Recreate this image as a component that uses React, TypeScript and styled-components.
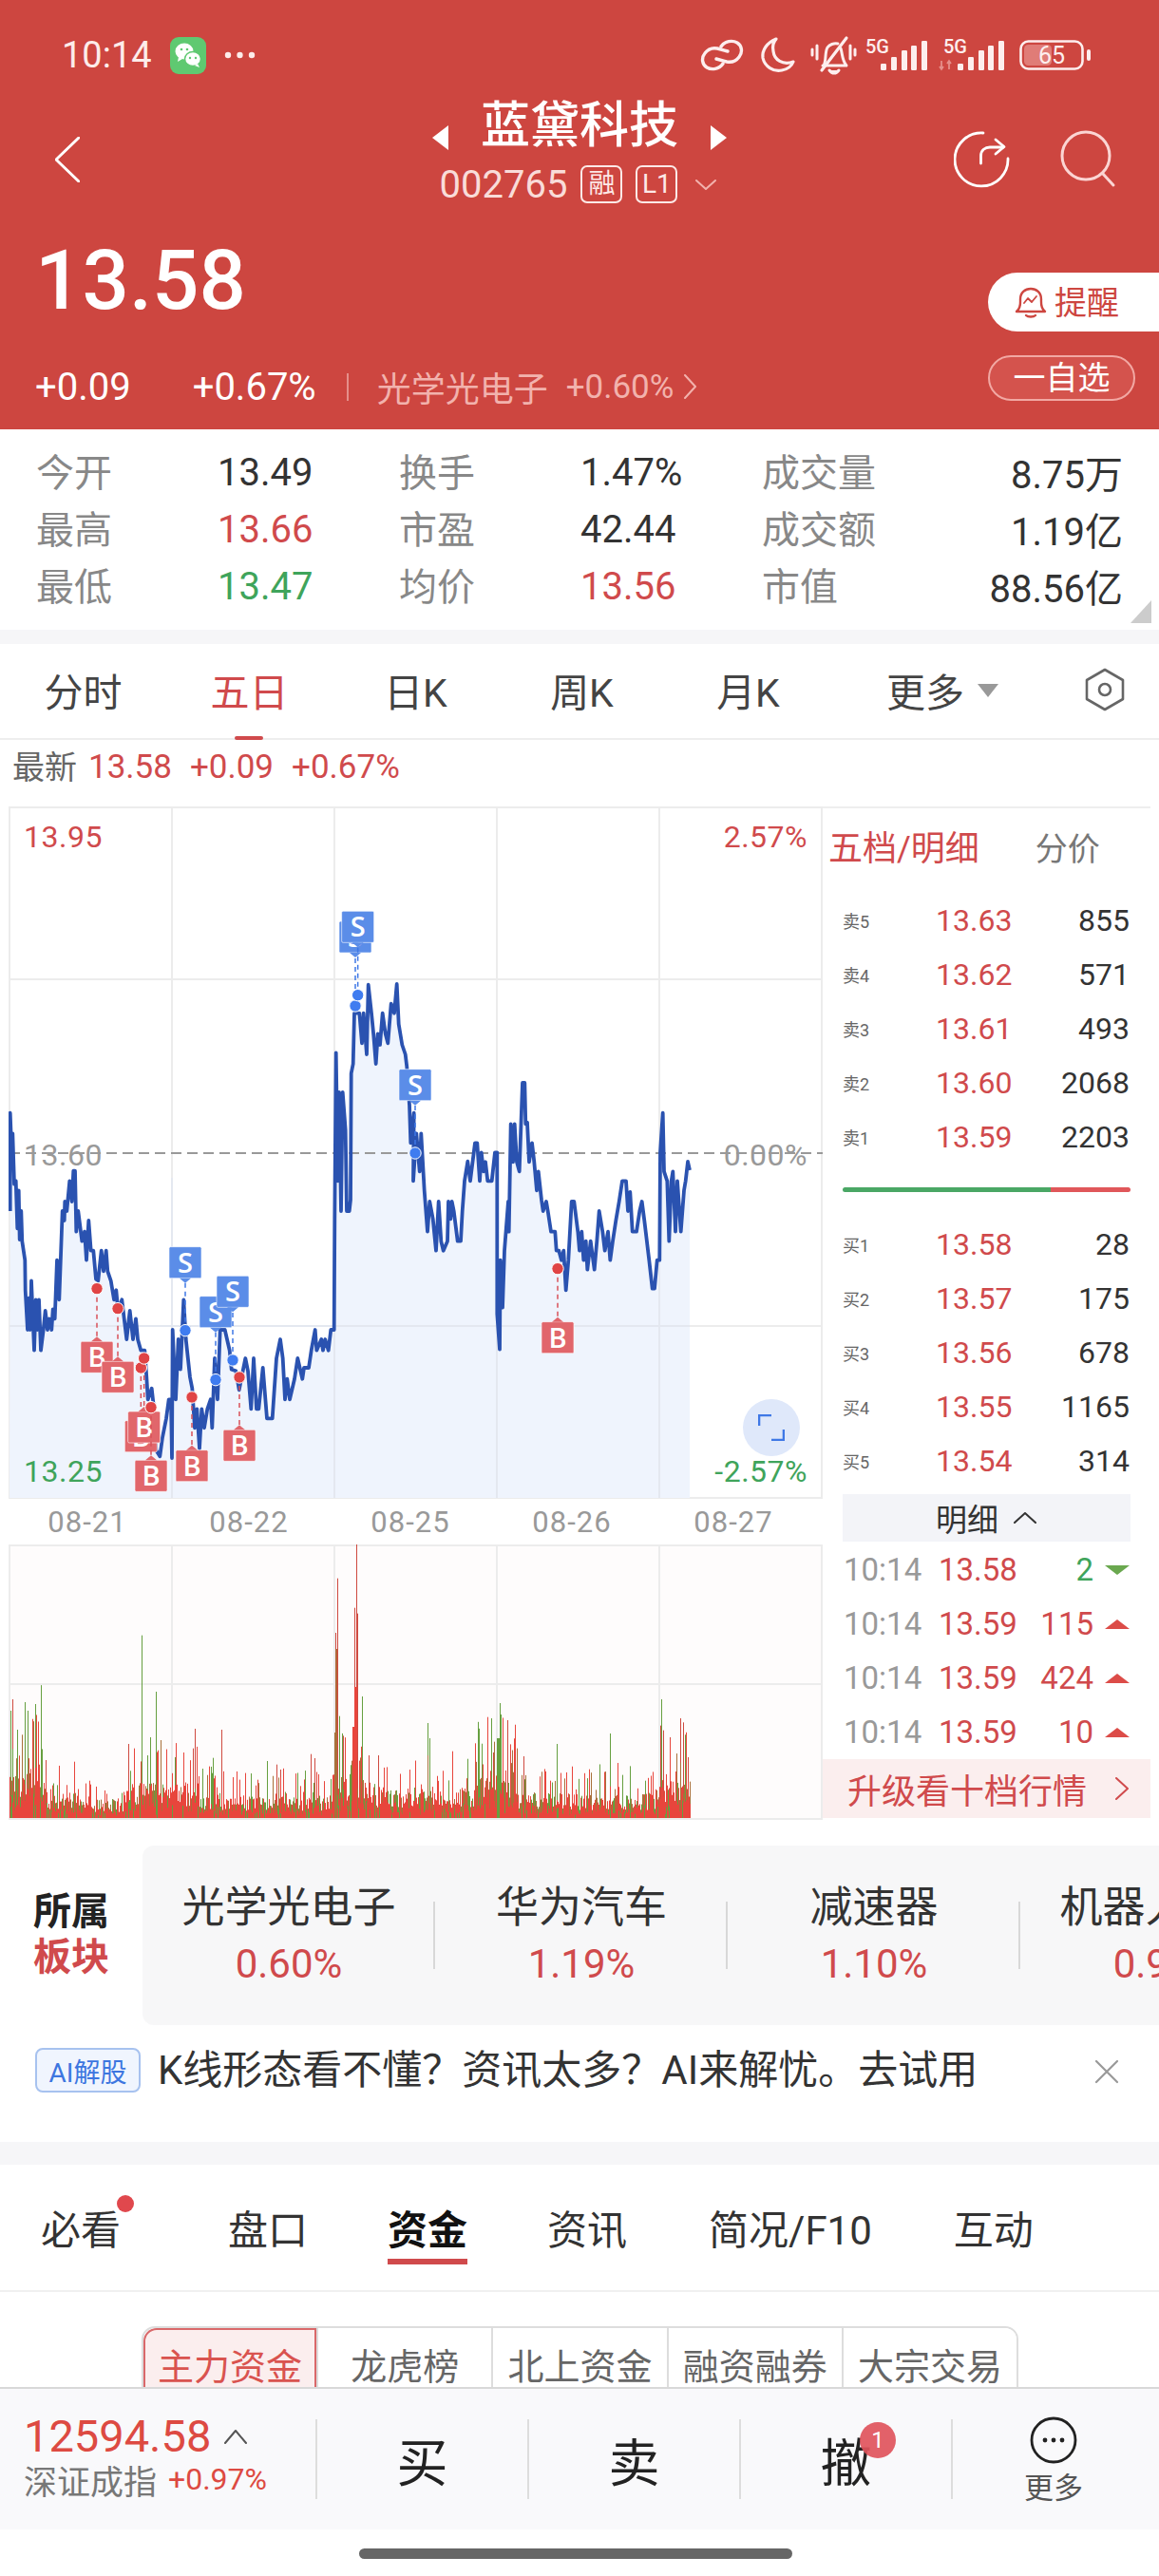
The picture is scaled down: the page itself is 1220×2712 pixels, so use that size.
import React from 'react';
import styled, { createGlobalStyle } from 'styled-components';

const RED = '#d04a4c';
const GREEN = '#3fa45b';
const HEAD = '#cd4640';
const FONT = 'Roboto, "Noto Sans CJK SC", sans-serif';

const Global = createGlobalStyle`
  html, body { margin: 0; padding: 0; background: #fff; }
  body { width: 1220px; height: 2712px; overflow: hidden; font-family: ${FONT}; }
  * { box-sizing: border-box; }
`;

const Page = styled.div`
  width: 1220px;
  height: 2712px;
  overflow: hidden;
  background: #fff;
  color: #333;
`;

/* ---------- red header ---------- */
const Header = styled.header`
  height: 452px;
  background: ${HEAD};
  color: #fff;
`;

const StatusBar = styled.div`
  height: 100px;
  padding: 16px 72px 0 65px;
  display: flex;
  align-items: center;
  justify-content: space-between;
`;

const StatusLeft = styled.div`
  display: flex;
  align-items: center;
  gap: 19px;
`;

const Clock = styled.span`
  font-size: 38px;
  line-height: 40px;
  color: #fdecea;
`;

const StatusIcons = styled.div`
  display: flex;
  align-items: center;
`;

const StatusGlyph = styled.svg<{ $gap?: number }>`
  display: block;
  overflow: visible;
  margin-left: ${(p) => p.$gap ?? 0}px;
`;

const Nav = styled.div`
  height: 136px;
  padding: 1px 42px 0 58px;
  display: grid;
  grid-template-columns: 312px 480px 328px;
`;

const BackCell = styled.div`
  display: flex;
  align-items: center;
  height: 134px;
`;

const TitleCell = styled.div`
  display: flex;
  flex-direction: column;
  align-items: center;
`;

const TitleLine = styled.div`
  height: 64px;
  display: flex;
  align-items: center;
  gap: 34px;
  font-size: 52px;
  font-weight: 500;
  line-height: 64px;
`;

const Caret = styled.span<{ $left?: boolean }>`
  width: 0;
  height: 0;
  margin-top: 24px;
  border-top: 13px solid transparent;
  border-bottom: 13px solid transparent;
  ${(p) => (p.$left ? 'border-right: 17px solid #fff;' : 'border-left: 17px solid #fff;')}
`;

const CodeLine = styled.div`
  height: 58px;
  margin-left: -3px;
  display: flex;
  align-items: center;
  font-size: 40px;
  color: #f9dcd9;
`;

const CodeBadge = styled.span`
  width: 44px;
  height: 40px;
  margin-left: 14px;
  border: 2px solid #fde9e7;
  border-radius: 7px;
  display: flex;
  align-items: center;
  justify-content: center;
  font-size: 28px;
  line-height: 1;
  color: #fde9e7;
`;

const CodeArrow = styled.span`
  margin-left: 19px;
  display: flex;
`;

const ActionCell = styled.div`
  height: 134px;
  display: flex;
  align-items: center;
  justify-content: flex-end;
  gap: 52px;
`;

const Quote = styled.div`
  display: flex;
  justify-content: space-between;
`;

const QuoteLeft = styled.div`
  padding: 14px 0 0 37px;
`;

const BigPrice = styled.div`
  font-size: 87px;
  line-height: 90px;
  font-weight: 500;
`;

const ChangeRow = styled.div`
  margin-top: 42px;
  height: 50px;
  display: flex;
  align-items: center;
  font-size: 40px;
`;

const ChangeValue = styled.span<{ $gap?: number }>`
  margin-left: ${(p) => p.$gap ?? 0}px;
`;

const Pipe = styled.span`
  width: 2px;
  height: 29px;
  margin: 0 30px 0 32px;
  background: #e58f8a;
`;

const Sector = styled.span`
  font-size: 36px;
  color: #f2b2ad;
`;

const SectorPct = styled.span`
  margin-left: 19px;
  font-size: 35px;
  color: #f2b2ad;
`;

const SectorArrow = styled.span`
  margin-left: 11px;
  display: flex;
`;

const QuoteRight = styled.div`
  width: 180px;
  padding-top: 51px;
  display: flex;
  flex-direction: column;
  gap: 25px;
`;

const RemindButton = styled.div`
  height: 62px;
  padding-left: 28px;
  display: flex;
  align-items: center;
  gap: 8px;
  background: #fff;
  border-radius: 31px 0 0 31px;
  color: ${HEAD};
  font-size: 34px;
`;

const RemindText = styled.span`
  margin-top: -4px;
`;

const WatchButton = styled.div`
  width: 155px;
  height: 48px;
  display: flex;
  align-items: center;
  justify-content: center;
  border: 2px solid #f2a8a3;
  border-radius: 24px;
  background: #d4534d;
  font-size: 34px;
  line-height: 1;
`;

/* ---------- stats ---------- */
const Stats = styled.div`
  height: 211px;
  padding: 15px 38px 0;
  position: relative;
  display: grid;
  grid-template-columns: 192px 190px 192px 190px 200px 180px;
  grid-auto-rows: 60px;
  align-items: center;
`;

const StatLabel = styled.span`
  margin-top: -4px;
  font-size: 40px;
  color: #888;
`;

const StatValue = styled.span<{ $tone?: 'up' | 'down'; $end?: boolean }>`
  margin-left: ${(p) => (p.$end ? 0 : -1)}px;
  font-size: 40px;
  color: ${(p) => (p.$tone === 'up' ? RED : p.$tone === 'down' ? GREEN : '#333')};
  text-align: ${(p) => (p.$end ? 'right' : 'left')};
`;

const CornerMark = styled.span`
  position: absolute;
  right: 8px;
  bottom: 7px;
  width: 0;
  height: 0;
  border-left: 22px solid transparent;
  border-bottom: 24px solid #ccc;
`;

const Band = styled.div<{ $h: number }>`
  height: ${(p) => p.$h}px;
  background: #f6f6f8;
`;

/* ---------- chart tabs ---------- */
const PeriodTabs = styled.div`
  height: 101px;
  padding-bottom: 4px;
  display: flex;
  align-items: center;
  border-bottom: 2px solid #eee;
  position: relative;
`;

const PeriodTab = styled.div<{ $active?: boolean }>`
  width: 175px;
  text-align: center;
  font-size: 41px;
  position: relative;
  color: ${(p) => (p.$active ? RED : '#444')};
`;

const ActiveMark = styled.span`
  position: absolute;
  left: 247px;
  bottom: -2px;
  width: 30px;
  height: 4px;
  border-radius: 2px;
  background: ${RED};
`;

const MoreTab = styled.div`
  margin-left: 58px;
  display: flex;
  align-items: center;
  gap: 14px;
  font-size: 41px;
  color: #444;
`;

const DownCaret = styled.span`
  width: 0;
  height: 0;
  margin-top: 2px;
  border-left: 11px solid transparent;
  border-right: 11px solid transparent;
  border-top: 14px solid #999;
`;

const SettingCell = styled.div`
  margin-left: auto;
  margin-right: 35px;
  display: flex;
`;

const LatestRow = styled.div`
  height: 70px;
  padding: 9px 0 0 13px;
  display: flex;
  font-size: 35px;
  line-height: 40px;
  color: ${RED};
`;

const LatestTag = styled.span`
  margin-right: 12px;
  font-size: 34px;
  color: #666;
`;

const LatestValue = styled.span`
  margin-right: 19px;
`;

/* ---------- chart + order book ---------- */
const Market = styled.div`
  height: 1067px;
  display: flex;
`;

const ChartColumn = styled.div`
  width: 866px;
`;

const PriceChart = styled.div`
  position: relative;
  width: 857px;
  height: 729px;
  margin-left: 9px;
  background: #fff;
`;

const ChartSvg = styled.svg`
  display: block;
`;

const AxisLabel = styled.span<{ $tone: 'up' | 'down' | 'flat'; $top: number; $right?: boolean }>`
  position: absolute;
  top: ${(p) => p.$top}px;
  ${(p) => (p.$right ? 'right: 16px;' : 'left: 16px;')}
  font-size: 32px;
  line-height: 36px;
  letter-spacing: 0.5px;
  color: ${(p) => (p.$tone === 'up' ? RED : p.$tone === 'down' ? GREEN : '#999')};
`;

const ExpandButton = styled.div`
  position: absolute;
  left: 773px;
  top: 624px;
  width: 60px;
  height: 60px;
  border-radius: 50%;
  background: #dfe8fa;
  display: flex;
  align-items: center;
  justify-content: center;
`;

const DateRow = styled.div`
  height: 48px;
  padding-left: 7px;
  display: grid;
  grid-template-columns: repeat(5, 170px);
  align-items: center;
  font-size: 31px;
  letter-spacing: 1px;
  color: #999;
  text-align: center;
`;

const VolumeChart = styled.div`
  margin-left: 9px;
  width: 857px;
  height: 290px;
`;

const BookColumn = styled.aside`
  width: 354px;
  padding-right: 9px;
  display: flex;
  flex-direction: column;
`;

const BookHead = styled.div`
  height: 91px;
  padding: 20px 0 0 6px;
  display: flex;
  border-top: 2px solid #eee;
`;

const BookTitle = styled.span`
  font-size: 36px;
  line-height: 46px;
  color: ${RED};
`;

const BookSwitch = styled.span`
  margin-left: 59px;
  font-size: 34px;
  line-height: 46px;
  color: #777;
`;

const BookRows = styled.div`
  padding: 0 22px 0 21px;
`;

const OrderRow = styled.div`
  height: 57px;
  display: grid;
  grid-template-columns: 98px 100px 1fr;
  align-items: center;
`;

const OrderLabel = styled.span`
  font-size: 18px;
  color: #666;
`;

const OrderPrice = styled.span`
  font-size: 32px;
  color: ${RED};
`;

const OrderQty = styled.span`
  font-size: 32px;
  text-align: right;
  color: #333;
`;

const Ratio = styled.div`
  height: 56px;
  padding: 25px 21px 0;
  display: flex;
`;

const RatioPart = styled.span<{ $buy?: boolean }>`
  display: block;
  height: 5px;
  ${(p) =>
    p.$buy
      ? `width: 219px; background: #4aa765; border-radius: 3px 0 0 3px;`
      : `flex: 1; background: #e0575a; border-radius: 0 3px 3px 0;`}
`;

const DetailToggle = styled.div`
  height: 50px;
  margin: 7px 21px 0;
  background: #f3f4f8;
  display: flex;
  align-items: center;
  padding-left: 98px;
  gap: 16px;
  font-size: 33px;
  color: #333;
`;

const TradeRows = styled.div`
  padding: 1px 21px 0 22px;
`;

const TradeRow = styled.div`
  height: 57px;
  display: grid;
  grid-template-columns: 100px 84px 79px 1fr;
  align-items: center;
  font-size: 33px;
`;

const TradeTime = styled.span`
  color: #999;
`;

const TradePrice = styled.span`
  color: ${RED};
`;

const TradeQty = styled.span<{ $down?: boolean }>`
  text-align: right;
  color: ${(p) => (p.$down ? GREEN : RED)};
`;

const TradeArrow = styled.span<{ $down?: boolean }>`
  justify-self: end;
  width: 0;
  height: 0;
  margin-right: 1px;
  border-left: 13px solid transparent;
  border-right: 13px solid transparent;
  ${(p) => (p.$down ? 'border-top: 10px solid #6aa84f;' : `border-bottom: 10px solid #dc4c48;`)}
`;

const UpgradeBar = styled.div`
  height: 62px;
  padding: 0 23px 0 26px;
  display: flex;
  align-items: center;
  justify-content: space-between;
  background: #fbeeee;
  font-size: 36px;
  color: ${RED};
`;

/* ---------- sectors ---------- */
const SectorSection = styled.section`
  margin-top: 27px;
  height: 189px;
  display: flex;
`;

const SectorTitle = styled.div`
  width: 150px;
  padding: 46px 0 0 35px;
  font-size: 40px;
  font-weight: 700;
  line-height: 48px;
  color: #222;
`;

const SectorTitleAccent = styled.span`
  display: block;
  color: ${RED};
`;

const SectorCard = styled.div`
  flex: 1;
  display: flex;
  overflow: hidden;
  padding-top: 43px;
  background: #f7f7f8;
  border-radius: 12px 0 0 12px;
`;

const SectorItem = styled.div`
  flex: 0 0 308px;
  height: 110px;
  display: flex;
  flex-direction: column;
  align-items: center;
  position: relative;
  white-space: nowrap;
  &:not(:last-child)::after {
    content: '';
    position: absolute;
    right: 0;
    top: 16px;
    height: 71px;
    width: 2px;
    background: #d8d8d8;
  }
`;

const SectorName = styled.span`
  font-size: 45px;
  line-height: 46px;
  color: #333;
`;

const SectorChange = styled.span`
  margin-top: 13px;
  font-size: 42px;
  line-height: 46px;
  color: ${RED};
`;

const AiRow = styled.div`
  height: 123px;
  padding: 24px 42px 0 37px;
  display: flex;
  align-items: flex-start;
`;

const AiBadge = styled.span`
  width: 111px;
  height: 47px;
  border: 2px solid #a7c2ef;
  border-radius: 8px;
  background: #f0f5fe;
  display: flex;
  align-items: center;
  justify-content: center;
  font-size: 28px;
  color: #3d76e0;
`;

const AiText = styled.span`
  margin-left: 18px;
  font-size: 42px;
  line-height: 48px;
  color: #333;
  white-space: nowrap;
`;

const CloseCell = styled.span`
  margin-left: auto;
  margin-top: 12px;
  display: flex;
`;

/* ---------- section tabs ---------- */
const SectionTabs = styled.nav`
  height: 134px;
  padding-bottom: 2px;
  border-bottom: 2px solid #f0f0f0;
  position: relative;
  display: flex;
  align-items: center;
`;

const SectionTab = styled.span<{ $active?: boolean; $left: number }>`
  margin-left: ${(p) => p.$left}px;
  font-size: 42px;
  font-weight: ${(p) => (p.$active ? 700 : 400)};
  color: ${(p) => (p.$active ? '#111' : '#333')};
  position: relative;
  white-space: nowrap;
`;

const TabUnderline = styled.span`
  position: absolute;
  left: 0;
  right: 0;
  top: 64px;
  height: 6px;
  background: ${RED};
`;

const TabDot = styled.span`
  position: absolute;
  right: -14px;
  top: -3px;
  width: 18px;
  height: 18px;
  border-radius: 50%;
  background: #e0484d;
`;

const SubTabsClip = styled.div`
  height: 100px;
  padding: 36px 0 0 149px;
  overflow: hidden;
`;

const SubTabs = styled.div`
  width: 923px;
  height: 90px;
  display: flex;
  border: 2px solid #ddd;
  border-radius: 14px 14px 0 0;
  overflow: hidden;
`;

const SubTab = styled.div<{ $active?: boolean }>`
  flex: 1;
  padding-top: 20px;
  text-align: center;
  font-size: 38px;
  line-height: 42px;
  white-space: nowrap;
  color: ${(p) => (p.$active ? '#d9534f' : '#666')};
  background: ${(p) => (p.$active ? '#fbeeee' : '#fff')};
  ${(p) => p.$active && 'box-shadow: inset 0 0 0 2px #d9686a; border-radius: 14px 0 0 0;'}
  & + & {
    border-left: 2px solid #ddd;
  }
`;

/* ---------- bottom bar ---------- */
const BottomBar = styled.footer`
  height: 150px;
  padding-top: 27px;
  background: #f9f9fb;
  border-top: 2px solid #d8d8d8;
  display: grid;
  grid-template-columns: 332px 223px 223px 223px 1fr;
  align-items: start;
`;

const IndexCell = styled.div`
  padding-left: 25px;
`;

const IndexValue = styled.div`
  height: 46px;
  display: flex;
  align-items: center;
  gap: 14px;
  font-size: 47px;
  line-height: 46px;
  color: #dd4a42;
`;

const IndexSub = styled.div`
  height: 44px;
  display: flex;
  align-items: center;
  font-size: 35px;
  color: #777;
`;

const IndexPct = styled.span`
  margin-left: 12px;
  font-size: 32px;
  color: #dd4a42;
`;

const TradeCell = styled.div`
  margin-top: 5px;
  height: 84px;
  border-left: 2px solid #ddd;
  display: flex;
  align-items: center;
  justify-content: center;
  position: relative;
  font-size: 54px;
  color: #222;
`;

const CountBadge = styled.span`
  position: absolute;
  left: 125px;
  top: 3px;
  width: 38px;
  height: 38px;
  border-radius: 50%;
  background: rgba(224, 84, 92, 0.92);
  color: #fff;
  font-size: 24px;
  display: flex;
  align-items: center;
  justify-content: center;
`;

const MoreCell = styled(TradeCell)`
  flex-direction: column;
  justify-content: flex-start;
  padding-right: 5px;
  font-size: 31px;
  color: #555;
  line-height: 36px;
`;

const MoreCircle = styled.svg`
  flex: none;
  margin-top: -3px;
`;

const MoreLabel = styled.span`
  flex: none;
  margin-top: 8px;
`;

const HomeArea = styled.div`
  height: 49px;
  padding-top: 20px;
  display: flex;
  justify-content: center;
`;

const HomePill = styled.span`
  width: 456px;
  height: 11px;
  margin-left: -8px;
  border-radius: 6px;
  background: #666;
`;

/* ---------- chart data ---------- */
const LEFT: number[][] = [
  [17,375],[17,65],[22,190],[25,130],[30,290],[35,280],[40,430],[44,310],[47,465],[52,375],[55,470],[64,530],[65,625],[72,750],[76,650],[80,750],[84,595],[93,815],[98,655],[103,750],[108,655],[114,815],[122,750],[128,690],[135,750],[140,715],[148,750],[152,685],[158,715],[165,530],[172,655],[182,375],[188,405],[190,345],[196,375],[205,280],[212,345],[217,248],[222,248],[226,440],[232,375],[244,470],[252,440],[258,530],[265,405],[272,500],[280,500],[288,590],[295,595],[305,500],[312,565],[320,500],[325,565],[335,595],[345,655],[352,625],[358,690],[370,655],[385,780],[395,690],[405,780],[414,715],[420,780],[430,815],[442,815],[448,900],[452,970],[464,935],[470,990],[478,1130],[490,1150],[498,1090],[510,1030],[518,970],[525,970],[528,1155],[530,750],[540,970],[548,780],[555,875],[565,655],[572,780],[585,900],[592,935],[600,1060],[607,1000],[615,1125],[622,1000],[630,1060],[640,1000],[650,970],[655,1060],[663,840],[672,970],[680,750],[695,750],[710,815],[716,875],[730,880],[740,940],[760,840],[768,880],[778,1000],[786,840],[795,1000],[802,1000],[815,870],[828,1030],[845,1030],[858,840],[870,780],[878,840],[885,970],[892,905],[900,970],[915,905],[925,840],[940,905],[945,870],[960,870],[968,815],[980,750],[985,815],[1000,780],[1005,815],[1012,780],[1022,815],[1030,750],[1040,750],
];

const RIGHT: number[][] = [
  [20,1340],[22,1000],[26,475],[32,880],[36,600],[42,975],[47,600],[56,720],[60,975],[68,975],[72,940],[74,540],[80,510],[84,350],[100,350],[108,445],[113,350],[123,480],[128,260],[138,350],[145,420],[152,510],[158,415],[165,450],[173,350],[182,415],[190,445],[200,320],[210,350],[218,258],[224,385],[235,450],[245,480],[250,520],[258,640],[262,760],[272,665],[270,880],[280,730],[290,850],[295,730],[305,910],[315,1040],[322,945],[332,1000],[342,1100],[350,945],[358,1070],[365,1100],[378,1070],[381,945],[388,1000],[392,945],[398,975],[410,1070],[420,1070],[425,975],[432,880],[442,818],[450,880],[465,760],[472,760],[480,880],[485,790],[492,850],[498,820],[505,880],[518,880],[528,790],[535,790],[535,1300],[543,1412],[545,1130],[552,1280],[558,1100],[570,945],[572,1040],[578,700],[585,820],[590,700],[597,820],[605,850],[615,570],[622,570],[625,700],[630,695],[636,820],[645,760],[652,820],[660,910],[665,850],[675,940],[680,975],[690,945],[695,975],[705,1040],[718,1040],[722,1100],[730,1100],[738,1130],[745,1100],[752,1225],[760,1130],[770,945],[778,945],[790,1040],[795,1100],[802,1040],[808,1130],[815,1070],[820,1160],[830,1070],[842,1160],[850,1070],[857,975],[868,1040],[875,1100],[885,1040],[892,1130],[900,1070],[910,1005],[920,945],[930,880],[942,880],[948,975],[955,915],[962,1040],[975,1040],[985,975],[992,945],[1000,1005],[1015,1130],[1025,1220],[1032,1220],[1040,1130],[1048,1130],[1050,790],[1058,665],[1062,850],[1072,880],[1078,1070],[1085,880],[1090,850],[1098,1040],[1104,880],[1115,1040],[1125,910],[1130,880],[1137,820],
];

const linePoints: number[][] = [
  ...LEFT.map(([x, y]) => [5 + x / 3, 1150 + y / 3]),
  ...RIGHT.map(([x, y]) => [345 + x / 3, 950 + y / 3]),
  [724, 1223],
  [726, 1232],
];

const lineAttr = linePoints.map((p) => p.map((n) => n.toFixed(1)).join(',')).join(' ');
const areaAttr = `10,1577 ${lineAttr} 726,1577`;

// kind, tag centre x, tag top, dot y (all in page px)
type Marker = { kind: 'B' | 'S'; x: number; top: number; dotY: number };

const left8 = (kind: 'B' | 'S', zx: number, ztop: number, zdot: number): Marker => ({
  kind,
  x: 5 + zx / 3,
  top: 1150 + ztop / 3,
  dotY: 1150 + zdot / 3,
});
const left9 = (kind: 'B' | 'S', zx: number, ztop: number, zdot: number): Marker => ({
  kind,
  x: 345 + zx / 3,
  top: 950 + ztop / 3,
  dotY: 950 + zdot / 3,
});

const markers: Marker[] = [
  left8('B', 291, 787, 620),
  left8('B', 357, 850, 683),
  left8('B', 430, 1037, 870),
  left8('B', 440, 1008, 840),
  left8('B', 462, 1162, 995),
  left8('B', 591, 1130, 963),
  left8('B', 741, 1066, 900),
  left8('S', 570, 488, 752),
  left8('S', 666, 644, 908),
  left8('S', 720, 580, 846),
  left9('S', 87, 60, 327),
  left9('S', 95, 28, 293),
  left9('S', 276, 527, 792),
  left9('B', 726, 1325, 1157),
];

const TradeMarker = ({ m }: { m: Marker }) => {
  const isBuy = m.kind === 'B';
  const fill = isBuy ? '#e1666b' : '#5b8de8';
  const dash = isBuy ? '#d9505a' : '#3f78e6';
  const lineEnd = isBuy ? m.top - 5 : m.top + 38;
  const tip = isBuy
    ? `${m.x - 6},${m.top} ${m.x},${m.top - 5} ${m.x + 6},${m.top}`
    : `${m.x - 6},${m.top + 33} ${m.x},${m.top + 38} ${m.x + 6},${m.top + 33}`;
  return (
    <g>
      <line x1={m.x} x2={m.x} y1={m.dotY} y2={lineEnd} stroke={dash} strokeWidth="1.5" strokeDasharray="5 4" />
      <rect x={m.x - 17} y={m.top} width="34" height="33" rx="1.5" fill={fill} stroke="#fff" strokeWidth="0.6" />
      <polygon points={tip} fill={fill} />
      <text
        x={m.x}
        y={m.top + 27}
        textAnchor="middle"
        fontSize="29"
        fontWeight="600"
        fontFamily="'Open Sans', sans-serif"
        fill="#fff"
      >
        {m.kind}
      </text>
      <circle cx={m.x} cy={m.dotY} r="6.2" fill={isBuy ? '#e04445' : '#3f7cf0'} stroke="#fff" strokeWidth="1" />
    </g>
  );
};

const PricePlot = () => (
  <ChartSvg width="857" height="729" viewBox="9 849 857 729">
    <rect x="10" y="850" width="855" height="727" fill="#fff" stroke="#ececec" strokeWidth="2" />
    {[181, 352, 523, 694].map((x) => (
      <line key={x} x1={x} x2={x} y1="850" y2="1577" stroke="#ececec" strokeWidth="2" />
    ))}
    {[1031, 1396].map((y) => (
      <line key={y} x1="10" x2="865" y1={y} y2={y} stroke="#ececec" strokeWidth="2" />
    ))}
    <polygon points={areaAttr} fill="#eff4fd" />
    {[181, 352, 523, 694].map((x) => (
      <line key={`o${x}`} x1={x} x2={x} y1="1240" y2="1577" stroke="#e4e8f0" strokeWidth="2" />
    ))}
    <line x1="10" x2="726" y1="1396" y2="1396" stroke="#e4e8f0" strokeWidth="2" />
    <line x1="10" x2="866" y1="1214" y2="1214" stroke="#999" strokeWidth="2" strokeDasharray="11 6" />
    <polyline points={lineAttr} fill="none" stroke="#2a52b0" strokeWidth="3.8" strokeLinejoin="round" />
    {markers.map((m, i) => (
      <TradeMarker key={i} m={m} />
    ))}
  </ChartSvg>
);

// tall volume spikes read off the picture: zoomed x, zoomed y, colour
const SPIKES: [number, number, string][] = [
  [268,305,'g'],[295,483,'g'],[639,125,'r'],[636,297,'r'],[675,17,'r'],[672,218,'r'],[678,236,'r'],[643,560,'g'],[650,622,'r'],[687,498,'g'],[243,648,'r'],[369,600,'r'],[419,603,'r'],[284,627,'g'],[23,507,'r'],[20,543,'g'],[46,516,'g'],[53,543,'g'],[66,522,'g'],[32,603,'g'],[810,582,'g'],[814,630,'g'],[947,519,'g'],[949,555,'g'],[963,573,'r'],[1056,648,'g'],[1156,615,'g'],[1255,507,'g'],[1253,590,'r'],[1258,605,'r'],[1270,627,'r'],[1291,567,'r'],[1295,580,'r'],[1305,690,'r'],[590,680,'r'],[597,693,'r'],[506,702,'g'],[524,713,'r'],[532,729,'r'],[700,684,'r'],[718,684,'r'],[993,687,'r'],[936,675,'r'],[913,740,'r'],[331,690,'g'],[316,687,'r'],[86,699,'r'],[403,692,'g'],[365,662,'r'],[280,684,'g'],
];

const VOL_RED = '#e8453c';
const VOL_GREEN = '#669f3f';
const VOL_BROWN = '#a8703a';
const BASE_Y = 1914;

let seed = 20250827;
const rnd = () => {
  seed = (seed * 1664525 + 1013904223) % 4294967296;
  return seed / 4294967296;
};

const envelope = (x: number) => {
  if (x < 50) return 60;
  if (x < 85) return 26;
  if (x < 130) return 18;
  if (x < 210) return 34;
  if (x < 240) return 24;
  if (x < 350) return 22;
  if (x < 385) return 42;
  if (x < 500) return 30;
  if (x < 545) return 46;
  if (x < 690) return 24;
  return 38;
};

type Bar = { x: number; y: number; c: string };

const volumeBars = (() => {
  const tall: Bar[] = [];
  const solid: Bar[] = [];
  for (let px = 10; px < 727; px += 1) {
    const env = envelope(px);
    const r = rnd();
    const h = env * (0.35 + 0.75 * r);
    const roll = rnd();
    const c = roll < 0.2 ? VOL_GREEN : roll < 0.42 ? VOL_BROWN : VOL_RED;
    tall.push({ x: px + 0.5, y: BASE_Y - h * (rnd() < 0.28 ? 2.2 : 1), c });
    solid.push({ x: px + 0.5, y: BASE_Y - h * (0.25 + 0.4 * rnd()), c: rnd() < 0.14 ? VOL_GREEN : VOL_RED });
  }
  return { tall, solid };
})();

const VolumePlot = () => (
  <ChartSvg width="857" height="290" viewBox="9 1626 857 290">
    <rect x="10" y="1627" width="855" height="288" fill="#fefcfc" stroke="#ececec" strokeWidth="2" />
    {[181, 352, 523, 694].map((x) => (
      <line key={x} x1={x} x2={x} y1="1627" y2="1915" stroke="#ececec" strokeWidth="2" />
    ))}
    <line x1="10" x2="865" y1="1773" y2="1773" stroke="#ececec" strokeWidth="2" />
    {SPIKES.map(([zx, zy, c], i) => {
      const x = Math.round(zx / 1.802) + 0.5;
      return <line key={i} x1={x} x2={x} y1={BASE_Y} y2={1620 + zy / 3} stroke={c === 'r' ? '#cf4a40' : VOL_GREEN} strokeWidth="1" />;
    })}
    {volumeBars.tall.map((b, i) => (
      <line key={`t${i}`} x1={b.x} x2={b.x} y1={BASE_Y} y2={b.y} stroke={b.c} strokeWidth="1" />
    ))}
    {volumeBars.solid.map((b, i) => (
      <line key={`s${i}`} x1={b.x} x2={b.x} y1={BASE_Y} y2={b.y} stroke={b.c} strokeWidth="1" />
    ))}
    <rect x="371" y="1818" width="5" height="96" fill={VOL_RED} />
    <rect x="373" y="1776" width="3" height="42" fill={VOL_RED} />
    <rect x="352" y="1824" width="3" height="90" fill={VOL_BROWN} />
    <rect x="353" y="1736" width="2" height="88" fill="#b0683a" />
    <rect x="523" y="1830" width="3" height="84" fill={VOL_GREEN} />
  </ChartSvg>
);

/* ---------- icons ---------- */
const WeChatIcon = () => (
  <svg width="38" height="39" viewBox="0 0 38 39">
    <rect width="38" height="39" rx="9" fill="#5fc971" />
    <ellipse cx="15" cy="15" rx="9.5" ry="8.5" fill="#fff" />
    <path d="M9 21l-1 5 5-3z" fill="#fff" />
    <ellipse cx="24" cy="23" rx="8.5" ry="7.5" fill="#fff" stroke="#5fc971" strokeWidth="1.5" />
    <path d="M29 28l2 4-5-2z" fill="#fff" />
    <circle cx="12" cy="13" r="1.3" fill="#5fc971" />
    <circle cx="18" cy="13" r="1.3" fill="#5fc971" />
    <circle cx="21" cy="22" r="1.2" fill="#5fc971" />
    <circle cx="27" cy="22" r="1.2" fill="#5fc971" />
  </svg>
);

const DotsIcon = () => (
  <svg width="33" height="10" viewBox="0 0 33 10">
    <circle cx="4" cy="5" r="3.2" fill="#fdecea" />
    <circle cx="16.5" cy="5" r="3.2" fill="#fdecea" />
    <circle cx="29" cy="5" r="3.2" fill="#fdecea" />
  </svg>
);

const Glyph = '#fdeeee';

const LinkIcon = () => (
  <StatusGlyph width="46" height="36" viewBox="0 0 46 36" fill="none" stroke={Glyph} strokeWidth="3.4" strokeLinecap="round">
    <path d="M22 9 C26 3 34 2 39 5 C44 8 45 15 41 20 C38 24 33 26 28 25 L17 22" />
    <path d="M24 27 C20 33 12 34 7 31 C2 28 1 21 5 16 C8 12 13 10 18 11 L29 14" />
  </StatusGlyph>
);

const MoonIcon = () => (
  <StatusGlyph $gap={17} width="37" height="38" viewBox="0 0 37 38" fill="none" stroke={Glyph} strokeWidth="3.2">
    <path d="M17 2 C7 6 2 14 3 22 C5 31 14 37 23 35 C29 34 33 31 35 26 C24 30 15 24 14 15 C13 10 14 5 17 2 Z" strokeLinejoin="round" />
  </StatusGlyph>
);

const BellOffIcon = () => (
  <StatusGlyph $gap={16} width="49" height="41" viewBox="0 0 49 41" fill="none" stroke={Glyph} strokeWidth="3" strokeLinecap="round">
    <path d="M14 31 C17 26 15 17 18 12 C20 9 25 7 29 8 M32 13 C34 19 33 25 38 31 L13 31" strokeLinejoin="round" />
    <path d="M12 36 L38 2" strokeWidth="3.2" />
    <path d="M20 36 C23 40 27 40 30 36" fill={Glyph} />
    <path d="M2 14 V20 M7 10 V24 M47 14 V20 M42 10 V24" />
  </StatusGlyph>
);

const SignalIcon = ({ gap, width, fade }: { gap: number; width: number; fade?: boolean }) => {
  const first = width - 49;
  const bars = [
    [0, 24],
    [11, 17],
    [22, 10],
    [32, 5],
    [43, 0],
  ];
  return (
    <StatusGlyph $gap={gap} width={width} height="32" viewBox={`0 0 ${width} 32`}>
      <text x={fade ? 4 : 0} y="14" fontSize="20" fontWeight="500" fontFamily="Roboto, sans-serif" fill={Glyph}>
        5G
      </text>
      {fade && <path d="M2 22 V31 M0 28 L2 31 L4 28 M10 31 V22 M8 25 L10 22 L12 25" stroke="#e58f8a" strokeWidth="1.8" fill="none" />}
      {bars.map(([x, y]) => (
        <rect key={x} x={first + x} y={y + 1} width="6" height={31 - y} rx="1.2" fill={Glyph} />
      ))}
    </StatusGlyph>
  );
};

const BatteryIcon = () => (
  <StatusGlyph $gap={16} width="75" height="32" viewBox="0 0 75 32">
    <rect x="1.5" y="1.5" width="65" height="29" rx="8" fill="none" stroke={Glyph} strokeWidth="2.6" />
    <rect x="5" y="5" width="29" height="22" rx="4.5" fill="#e07c77" />
    <rect x="71" y="10" width="4" height="12" rx="2" fill={Glyph} />
    <text x="34" y="25" textAnchor="middle" fontSize="25" fontFamily="Roboto, sans-serif" fill={Glyph}>
      65
    </text>
  </StatusGlyph>
);

const ShareIcon = () => (
  <svg width="60" height="60" viewBox="0 0 60 60" fill="none" stroke="#fff" strokeWidth="2.8" strokeLinecap="round" strokeLinejoin="round">
    <path d="M31 2 A28 28 0 1 0 57 29" />
    <path d="M28.5 34 V26 C28.5 20 33 17 38 17 H52" />
    <path d="M44 9 L53 16.5 L44 24" />
  </svg>
);

const SearchIcon = () => (
  <svg width="62" height="62" viewBox="0 0 62 62" fill="none" stroke="#fbd5d3" strokeWidth="3" strokeLinecap="round">
    <circle cx="27" cy="27" r="25" />
    <path d="M45 46 L56 58" />
  </svg>
);

const BellIcon = () => (
  <svg width="34" height="33" viewBox="0 0 34 33" fill="none" stroke={HEAD} strokeWidth="2.4" strokeLinejoin="round" strokeLinecap="round">
    <path d="M2 26 C7 22 6 17 6 13 C6 6 11 2 17 2 C23 2 28 6 28 13 C28 17 27 22 32 26 Z" />
    <path d="M12 30 C14 32 20 32 22 30" />
    <path d="M10 17 L14 12 L18 16 L23 10" strokeWidth="1.8" />
  </svg>
);

const Chevron = ({
  w,
  h,
  dir,
  color,
  sw = 2,
}: {
  w: number;
  h: number;
  dir: 'left' | 'right' | 'up' | 'down';
  color: string;
  sw?: number;
}) => {
  const d = {
    left: `M${w - 1} 1 L1 ${h / 2} L${w - 1} ${h - 1}`,
    right: `M1 1 L${w - 1} ${h / 2} L1 ${h - 1}`,
    up: `M1 ${h - 1} L${w / 2} 1 L${w - 1} ${h - 1}`,
    down: `M1 1 L${w / 2} ${h - 1} L${w - 1} 1`,
  }[dir];
  return (
    <svg width={w} height={h} viewBox={`0 0 ${w} ${h}`} fill="none" stroke={color} strokeWidth={sw} strokeLinecap="round" strokeLinejoin="round">
      <path d={d} />
    </svg>
  );
};

const HexIcon = () => (
  <svg width="44" height="46" viewBox="0 0 44 46" fill="none" stroke="#666" strokeWidth="2.6" strokeLinejoin="round">
    <path d="M22 2 L41 13 V33 L22 44 L3 33 V13 Z" />
    <circle cx="22" cy="23" r="6" />
  </svg>
);

const ExpandIcon = () => (
  <svg width="28" height="28" viewBox="0 0 28 28" fill="none" stroke="#3f78e6" strokeWidth="2.6">
    <path d="M1 12 V1 H14" />
    <path d="M27 16 V27 H14" />
  </svg>
);

const CloseIcon = () => (
  <svg width="26" height="26" viewBox="0 0 26 26" stroke="#999" strokeWidth="2.2" strokeLinecap="round">
    <path d="M2 2 L24 24 M24 2 L2 24" />
  </svg>
);

const MoreIcon = () => (
  <MoreCircle width="50" height="50" viewBox="0 0 50 50" fill="none">
    <circle cx="25" cy="25" r="23" stroke="#222" strokeWidth="2.8" />
    <circle cx="16" cy="25" r="2.4" fill="#222" />
    <circle cx="25" cy="25" r="2.4" fill="#222" />
    <circle cx="34" cy="25" r="2.4" fill="#222" />
  </MoreCircle>
);

/* ---------- data ---------- */
const stats: { label: string; value: string; tone?: 'up' | 'down' }[][] = [
  [
    { label: '今开', value: '13.49' },
    { label: '换手', value: '1.47%' },
    { label: '成交量', value: '8.75万' },
  ],
  [
    { label: '最高', value: '13.66', tone: 'up' },
    { label: '市盈', value: '42.44' },
    { label: '成交额', value: '1.19亿' },
  ],
  [
    { label: '最低', value: '13.47', tone: 'down' },
    { label: '均价', value: '13.56', tone: 'up' },
    { label: '市值', value: '88.56亿' },
  ],
];

const asks = [
  ['卖5', '13.63', '855'],
  ['卖4', '13.62', '571'],
  ['卖3', '13.61', '493'],
  ['卖2', '13.60', '2068'],
  ['卖1', '13.59', '2203'],
];

const bids = [
  ['买1', '13.58', '28'],
  ['买2', '13.57', '175'],
  ['买3', '13.56', '678'],
  ['买4', '13.55', '1165'],
  ['买5', '13.54', '314'],
];

const trades = [
  { price: '13.58', qty: '2', down: true },
  { price: '13.59', qty: '115' },
  { price: '13.59', qty: '424' },
  { price: '13.59', qty: '10' },
];

const sectors = [
  ['光学光电子', '0.60%'],
  ['华为汽车', '1.19%'],
  ['减速器', '1.10%'],
  ['机器人概念', '0.91%'],
];

const sectionTabs: { name: string; left: number; active?: boolean; dot?: boolean }[] = [
  { name: '必看', left: 43, dot: true },
  { name: '盘口', left: 113 },
  { name: '资金', left: 84, active: true },
  { name: '资讯', left: 84 },
  { name: '简况/F10', left: 86 },
  { name: '互动', left: 86 },
];

const OrderList = ({ rows }: { rows: string[][] }) => (
  <BookRows>
    {rows.map(([label, price, qty]) => (
      <OrderRow key={label}>
        <OrderLabel>{label}</OrderLabel>
        <OrderPrice>{price}</OrderPrice>
        <OrderQty>{qty}</OrderQty>
      </OrderRow>
    ))}
  </BookRows>
);

const App: React.FC = () => (
  <Page>
    <Global />
    <Header>
      <StatusBar>
        <StatusLeft>
          <Clock>10:14</Clock>
          <WeChatIcon />
          <DotsIcon />
        </StatusLeft>
        <StatusIcons>
          <LinkIcon />
          <MoonIcon />
          <BellOffIcon />
          <SignalIcon gap={9} width={65} />
          <SignalIcon gap={13} width={68} fade />
          <BatteryIcon />
        </StatusIcons>
      </StatusBar>
      <Nav>
        <BackCell>
          <Chevron w={26} h={48} dir="left" color="#fff" sw={3} />
        </BackCell>
        <TitleCell>
          <TitleLine>
            <Caret $left />
            <span>蓝黛科技</span>
            <Caret />
          </TitleLine>
          <CodeLine>
            002765
            <CodeBadge>融</CodeBadge>
            <CodeBadge>L1</CodeBadge>
            <CodeArrow>
              <Chevron w={22} h={11} dir="down" color="#f2b2ad" />
            </CodeArrow>
          </CodeLine>
        </TitleCell>
        <ActionCell>
          <ShareIcon />
          <SearchIcon />
        </ActionCell>
      </Nav>
      <Quote>
        <QuoteLeft>
          <BigPrice>13.58</BigPrice>
          <ChangeRow>
            <ChangeValue>+0.09</ChangeValue>
            <ChangeValue $gap={65}>+0.67%</ChangeValue>
            <Pipe />
            <Sector>光学光电子</Sector>
            <SectorPct>+0.60%</SectorPct>
            <SectorArrow>
              <Chevron w={13} h={26} dir="right" color="#f2b2ad" />
            </SectorArrow>
          </ChangeRow>
        </QuoteLeft>
        <QuoteRight>
          <RemindButton>
            <BellIcon />
            <RemindText>提醒</RemindText>
          </RemindButton>
          <WatchButton>一自选</WatchButton>
        </QuoteRight>
      </Quote>
    </Header>

    <Stats>
      {stats.map((row) =>
        row.map((s, i) => (
          <React.Fragment key={s.label}>
            <StatLabel>{s.label}</StatLabel>
            <StatValue $tone={s.tone} $end={i === 2}>
              {s.value}
            </StatValue>
          </React.Fragment>
        )),
      )}
      <CornerMark />
    </Stats>
    <Band $h={15} />

    <PeriodTabs>
      <PeriodTab>分时</PeriodTab>
      <PeriodTab $active>五日</PeriodTab>
      <PeriodTab>日K</PeriodTab>
      <PeriodTab>周K</PeriodTab>
      <PeriodTab>月K</PeriodTab>
      <MoreTab>
        更多
        <DownCaret />
      </MoreTab>
      <SettingCell>
        <HexIcon />
      </SettingCell>
      <ActiveMark />
    </PeriodTabs>

    <LatestRow>
      <LatestTag>最新</LatestTag>
      <LatestValue>13.58</LatestValue>
      <LatestValue>+0.09</LatestValue>
      <LatestValue>+0.67%</LatestValue>
    </LatestRow>

    <Market>
      <ChartColumn>
        <PriceChart>
          <PricePlot />
          <AxisLabel $tone="up" $top={14}>13.95</AxisLabel>
          <AxisLabel $tone="up" $top={14} $right>2.57%</AxisLabel>
          <AxisLabel $tone="flat" $top={349}>13.60</AxisLabel>
          <AxisLabel $tone="flat" $top={349} $right>0.00%</AxisLabel>
          <AxisLabel $tone="down" $top={682}>13.25</AxisLabel>
          <AxisLabel $tone="down" $top={682} $right>-2.57%</AxisLabel>
          <ExpandButton>
            <ExpandIcon />
          </ExpandButton>
        </PriceChart>
        <DateRow>
          <span>08-21</span>
          <span>08-22</span>
          <span>08-25</span>
          <span>08-26</span>
          <span>08-27</span>
        </DateRow>
        <VolumeChart>
          <VolumePlot />
        </VolumeChart>
      </ChartColumn>

      <BookColumn>
        <BookHead>
          <BookTitle>五档/明细</BookTitle>
          <BookSwitch>分价</BookSwitch>
        </BookHead>
        <OrderList rows={asks} />
        <Ratio>
          <RatioPart $buy />
          <RatioPart />
        </Ratio>
        <OrderList rows={bids} />
        <DetailToggle>
          明细
          <Chevron w={24} h={12} dir="up" color="#333" />
        </DetailToggle>
        <TradeRows>
          {trades.map((t, i) => (
            <TradeRow key={i}>
              <TradeTime>10:14</TradeTime>
              <TradePrice>{t.price}</TradePrice>
              <TradeQty $down={t.down}>{t.qty}</TradeQty>
              <TradeArrow $down={t.down} />
            </TradeRow>
          ))}
        </TradeRows>
        <UpgradeBar>
          升级看十档行情
          <Chevron w={14} h={24} dir="right" color={RED} />
        </UpgradeBar>
      </BookColumn>
    </Market>

    <SectorSection>
      <SectorTitle>
        所属
        <SectorTitleAccent>板块</SectorTitleAccent>
      </SectorTitle>
      <SectorCard>
        {sectors.map(([name, pct]) => (
          <SectorItem key={name}>
            <SectorName>{name}</SectorName>
            <SectorChange>{pct}</SectorChange>
          </SectorItem>
        ))}
      </SectorCard>
    </SectorSection>

    <AiRow>
      <AiBadge>AI解股</AiBadge>
      <AiText>{'K线形态看不懂\uFF1F资讯太多\uFF1FAI来解忧。去试用'}</AiText>
      <CloseCell>
        <CloseIcon />
      </CloseCell>
    </AiRow>
    <Band $h={24} />

    <SectionTabs>
      {sectionTabs.map((t) => (
        <SectionTab key={t.name} $left={t.left} $active={t.active}>
          {t.name}
          {t.dot && <TabDot />}
          {t.active && <TabUnderline />}
        </SectionTab>
      ))}
    </SectionTabs>

    <SubTabsClip>
      <SubTabs>
        <SubTab $active>主力资金</SubTab>
        <SubTab>龙虎榜</SubTab>
        <SubTab>北上资金</SubTab>
        <SubTab>融资融券</SubTab>
        <SubTab>大宗交易</SubTab>
      </SubTabs>
    </SubTabsClip>

    <BottomBar>
      <IndexCell>
        <IndexValue>
          12594.58
          <Chevron w={24} h={15} dir="up" color="#555" />
        </IndexValue>
        <IndexSub>
          深证成指
          <IndexPct>+0.97%</IndexPct>
        </IndexSub>
      </IndexCell>
      <TradeCell>买</TradeCell>
      <TradeCell>卖</TradeCell>
      <TradeCell>
        撤<CountBadge>1</CountBadge>
      </TradeCell>
      <MoreCell>
        <MoreIcon />
        <MoreLabel>更多</MoreLabel>
      </MoreCell>
    </BottomBar>
    <HomeArea>
      <HomePill />
    </HomeArea>
  </Page>
);

export default App;
